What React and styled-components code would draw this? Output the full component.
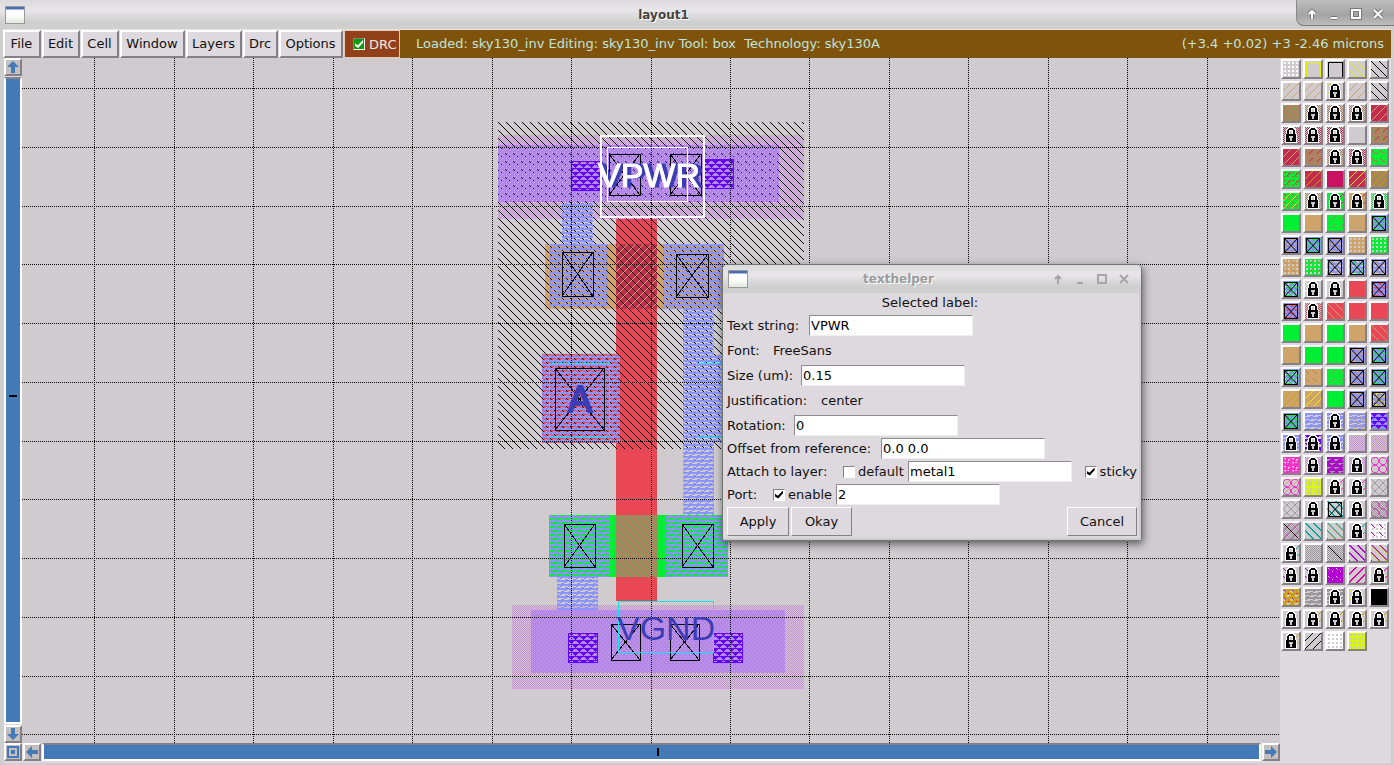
import React from "react";
import styled, { createGlobalStyle, css } from "styled-components";

const C = {
  panel: "#ded9de", canvas: "#cfcbcf", green: "#00ee33", tan: "#cea46b", brown: "#ac8260",
  crimson: "#c32c4e", red: "#ea4756", blue: "#8b93ff", violet: "#c98ae0", purple: "#6600ff",
  pink: "#ff33cc", plum: "#b400d2", teal: "#00aaa0", gold: "#c8a000", yellow: "#e6f000",
  lemon: "#d8f800", grey: "#a09ca0", slate: "#9a969a", ink: "#3c3cb4", cyan: "#14e6f0", rose: "#e6009a",
};

const Global = createGlobalStyle`
  *, *::before, *::after { box-sizing: border-box; }
  html, body, #root { height: 100%; }
  body { margin: 0; background: ${C.panel}; overflow: hidden; }
  body, button, input { font-family: "DejaVu Sans", sans-serif; font-size: 13px; color: #111; }
`;

const raised = css`
  border: 2px solid;
  border-color: #fff #858085 #858085 #fff;
`;

const Frame = styled.main`
  height: 100vh;
  display: flex;
  flex-direction: column;
  border: solid #cfcfcf;
  border-width: 0 3px 2px 4px;
  background: ${C.panel};
`;
const TitleBar = styled.header`
  height: ${(p) => (p.$small ? 28 : 29)}px;
  flex: none;
  display: flex;
  align-items: center;
  margin: ${(p) => (p.$small ? "0" : "0 -3px 0 -4px")};
  padding-left: 5px;
  background: linear-gradient(#dddadd, #e9e6e9 35%, #cfcfcf 75%);
`;
const WindowIcon = styled.span`
  width: 20px;
  height: 18px;
  border: 1px solid #999;
  background: linear-gradient(#4a6fb4 0 2px, #fff 3px, #fff 8px, #e2e8dc);
`;
const Title = styled.h1`
  flex: 1;
  margin: 0;
  padding-left: 6px;
  text-align: center;
  font: bold 12px "DejaVu Sans", sans-serif;
  color: ${(p) => (p.$dim ? "#9c9c9c" : "#444")};
  text-shadow: 1px 1px #fff;
`;
const Controls = styled.div`
  display: flex;
  align-self: stretch;
  align-items: center;
  padding: 0 6px 0 4px;
  ${(p) => !p.$dim && css`
    padding: 3px 5px 0 4px;
    margin-bottom: 3px;
    border-left: 1px solid #888;
    border-bottom: 1px solid #777;
    border-bottom-left-radius: 8px;
    background: linear-gradient(#bcbcbc, #a4a4a4 60%, #bdbdbd);
  `}
`;
const ControlButton = styled.button`
  width: 22px;
  height: 22px;
  padding: 0;
  border: 0;
  background: none;
  svg { display: block; margin: 0 auto; }
`;

const MenuBar = styled.nav`
  height: 29px;
  flex: none;
  display: flex;
  border-top: 1px solid #e8e2e0;
  margin-left: -1px;
`;
const MenuButton = styled.button`
  ${raised}
  padding: 0 1px 1px 0;
  margin-right: 1px;
  width: ${(p) => p.$w}px;
  background: ${C.panel};
`;
const DrcToggle = styled.label`
  display: flex;
  align-items: center;
  gap: 4px;
  width: 56px;
  padding-left: 8px;
  background: #92401a;
  border: 1px solid #e0c8b8;
  color: #f4e8e0;
`;
const Status = styled.p`
  flex: 1;
  margin: 0;
  padding: 0 7px 1px 16px;
  display: flex;
  align-items: center;
  justify-content: space-between;
  white-space: pre;
  background: #7f530b;
  color: #bfe4dc;
`;
const Check = styled.input`
  appearance: none;
  flex: none;
  position: relative;
  width: 12px;
  height: 12px;
  margin: 0;
  border: 1px solid;
  border-color: #858085 #fff #fff #858085;
  background: ${(p) => (p.$green ? "#0a9a0a" : "#fff")};
  &:checked::after {
    content: "";
    position: absolute;
    inset: 1px;
    background: ${(p) => (p.$green ? "#fff" : "#000")};
    clip-path: polygon(0 40%, 35% 65%, 100% 0, 100% 35%, 40% 100%, 0 75%);
  }
`;

const Body = styled.div`
  flex: 1;
  min-height: 0;
  display: flex;
`;
const Workspace = styled.section`
  flex: 1;
  min-width: 0;
  display: grid;
  grid-template: 1fr 20px / 18px 1fr;
`;
const VScroll = styled.div`
  display: flex;
  flex-direction: column;
  gap: 1px;
`;
const HScroll = styled.div`
  grid-column: 1 / 3;
  display: flex;
  gap: 1px;
  padding-bottom: 2px;
`;
const ScrollButton = styled.button`
  ${raised}
  flex: none;
  width: 18px;
  height: 18px;
  padding: 0;
  background: #c4c0c0;
  svg { display: block; }
`;
const Track = styled.div`
  flex: 1;
  border: 2px solid #fff;
  border-top-color: #858085;
  background: #447ab8;
  display: flex;
  align-items: center;
  justify-content: center;
  padding: ${(p) => (p.$vertical ? "0 0 10px" : "0 0 0 12px")};
  &::after {
    content: "";
    background: #000;
    width: ${(p) => (p.$vertical ? "8px" : "2px")};
    height: ${(p) => (p.$vertical ? "2px" : "8px")};
  }
`;
const Canvas = styled.div`
  position: relative;
  overflow: hidden;
  background: ${C.canvas};
  > svg { display: block; width: 100%; height: 100%; }
`;
const SelectedLabel = styled.text`
  fill: #fff;
  stroke: #fff;
  filter: drop-shadow(4px 0 0 ${C.ink});
`;

const Palette = styled.aside`
  width: 111px;
  flex: none;
  padding: 1px 0 0 1px;
`;
const Swatches = styled.div`
  display: grid;
  grid-template-columns: repeat(5, 20px);
  grid-auto-rows: 20px;
  gap: 2px;
`;
const Swatch = styled.button`
  ${raised}
  padding: 0;
  background: ${C.canvas};
  svg { display: block; }
`;

const Dialog = styled.form`
  position: absolute;
  left: 700px;
  top: 206px;
  width: 420px;
  border: 1px solid #6e746e;
  border-radius: 5px 5px 3px 3px;
  background: ${C.panel};
  box-shadow: 1px 3px 8px rgba(0, 0, 0, 0.55);
  overflow: hidden;
`;
const DialogBody = styled.div`
  padding: 0 2px 2px 4px;
  border: solid #cfcfcf;
  border-width: 0 2px 2px 0;
`;
const Heading = styled.h2`
  margin: 0;
  padding-right: 4px;
  height: 20px;
  font-size: inherit;
  font-weight: normal;
  line-height: 20px;
  text-align: center;
`;
const Row = styled.div`
  display: flex;
  align-items: center;
  height: ${(p) => (p.$tight ? 23 : 25)}px;
  padding-bottom: ${(p) => (p.$tight ? 2 : 0)}px;
  white-space: nowrap;
`;
const Name = styled.label`
  width: ${(p) => p.$w}px;
  padding-bottom: 1px;
`;
const Entry = styled.input`
  width: 164px;
  height: 21px;
  padding: 0 1px 1px;
  border: 1px solid;
  border-color: #8f8a8f #eee #eee #8f8a8f;
  border-radius: 0;
  background: #fff;
  color: #000;
`;
const Option = styled.label`
  display: flex;
  align-items: center;
  gap: 3px;
  width: ${(p) => (p.$w ? `${p.$w}px` : "auto")};
  margin-left: ${(p) => (p.$end ? "auto" : "0")};
`;
const Actions = styled.div`
  display: flex;
  gap: 2px;
`;
const ActionButton = styled.button`
  ${raised}
  border-width: 1px;
  width: ${(p) => p.$w}px;
  height: 29px;
  padding: 0 0 1px;
  background: ${C.panel};
  margin-left: ${(p) => (p.$last ? "auto" : "0")};
`;

/* One path of unit squares for every "1" in a bitmap. */
const bits = (rows) =>
  rows.flatMap((r, y) => [...r].map((b, x) => (b === "1" ? `M${x} ${y}h1v1h-1z` : ""))).join("");

const B = {
  diag: ["10000000", "01000000", "00100000", "00010000", "00001000", "00000100", "00000010", "00000001"],
  slash: ["00000001", "00000010", "00000100", "00001000", "00010000", "00100000", "01000000", "10000000"],
  diag2: ["11000000", "01100000", "00110000", "00011000", "00001100", "00000110", "00000011", "10000001"],
  slash2: ["00000011", "00000110", "00001100", "00011000", "00110000", "01100000", "11000000", "10000001"],
  sparseSlash: ["00000000", "00000001", "00000010", "00000100", "00001000", "00000000", "00000000", "00000000"],
  sparseDiag: ["00000000", "10000000", "01000000", "00100000", "00010000", "00000000", "00000000", "00000000"],
  dots: ["0000", "0110", "0110", "0000"],
  checker: ["10", "01"],
  dash: ["11111111", "11111111", "11000000", "00000111", "11111111", "11111111", "00001100", "01110000"],
  dash2: ["00000000", "00000000", "11110001", "11000000", "00000000", "00000000", "00011111", "00001100"],
  tri: ["11111111", "01111100", "00111000", "00010000", "11111111", "11000111", "10000011", "00000001"],
  lattice: ["10000001", "01000010", "00100100", "00011000", "00011000", "00100100", "01000010", "10000001"],
  circle: ["00111100", "01000010", "10000001", "10000001", "10000001", "10000001", "01000010", "00111100"],
  speck: ["00000000", "01100000", "00100110", "00000100", "00000000", "01101100", "00100000", "00000000"],
  pins: ["10001000", "00000000", "00100010", "00000000"],
  flecks: ["00000000", "01000000", "00100000", "00000000", "00000100", "00000000", "00000000", "00000000"],
  leds: ["00000000", "00000000", "00000000", "00010000", "00000000", "00000000", "00000000", "00000000"],
};

const Stipple = ({ id, color, rows }) => (
  <pattern id={id} width={rows[0].length} height={rows.length} patternUnits="userSpaceOnUse">
    <path d={bits(rows)} fill={color} shapeRendering="crispEdges" />
  </pattern>
);

const STIPPLES = [
  ["metal", "dash", C.blue], ["well", "diag", "#000"], ["rail", "checker", C.violet],
  ["gate", "slash", C.tan], ["channel", "diag", C.green], ["tap", "tri", C.purple],
  ["rose-pins", "pins", "#d8a4d8"], ["dark-flecks", "flecks", "#201850"], ["green-leds", "leds", "#00c840"],
];

const Lock = ({ hole }) => (
  <g shapeRendering="crispEdges">
    <path d="M5 0h6v1h1v1h1v5h1v9H2V7h1V2h1V1h1z" fill="#fff" />
    <path d="M6 1h4v1h1v1h1v4h1v8H3V7h1V3h1V2h1z" fill="#000" />
    <path d="M6 3h4v4H6z" fill="#fff" />
    <path d="M7 4h2v3H7z" fill={hole} />
    <path d="M6 9h4v2H9v3H7v-3H6z" fill={hole} />
  </g>
);

const Via = () => (
  <g stroke="#000" fill="none">
    <path d="M1.5 1.5h13v14h-13z" shapeRendering="crispEdges" />
    <path d="M2 2l12 13M14 2L2 15" />
  </g>
);

/* Each swatch: base colour, stipple layers [kind, colour], and an overlay mark. */
const s = (bg, ...layers) => ({ bg: C[bg] || bg, layers });
const lock = (kind, color, bg = "canvas") => ({ ...s(bg, ...(kind ? [[kind, color]] : [])), mark: "lock" });
const via = (color, extra) => ({ ...s("blue", ["dash2", color], ...(extra ? [["speck", extra]] : [])), mark: "via" });
const box = (color) => ({ ...s("canvas"), mark: "box", color });

const SWATCHES = [
  s("canvas", ["dots", "#fff"]), box(C.yellow), box("#000"), s("canvas", ["diag", C.yellow]), s("canvas", ["diag", "#000"]),
  s("canvas", ["slash", C.tan]), s("canvas", ["slash", C.tan]), lock("sparseDiag", C.yellow), s("canvas", ["slash", C.tan]), s("canvas", ["diag", "#000"]),
  s("brown", ["diag", "#5cb04c"]), lock("checker", C.brown), lock("checker", C.brown), lock("checker", C.brown), s("crimson", ["slash", C.tan]),
  lock("checker", C.crimson), lock("checker", C.crimson), lock("checker", C.crimson), s("canvas"), s("brown", ["sparseSlash", C.crimson], ["sparseDiag", "#5cb04c"]),
  s("crimson", ["slash", C.tan]), s("brown", ["sparseSlash", C.crimson]), lock("checker", C.brown), lock("checker", C.crimson), s("green", ["flecks", C.red], ["leds", C.red]),
  s("green", ["speck", C.red], ["sparseSlash", C.crimson]), s("crimson", ["slash", C.gold]), s("#c4145a", ["slash", C.rose]), s("crimson", ["slash", C.yellow]), s("brown", ["slash", C.gold], ["diag", "#7c9a28"]),
  s("green", ["speck", C.red], ["slash", C.yellow]), lock("checker", C.brown), lock("sparseSlash", C.rose, "green"), lock("sparseSlash", C.crimson, "tan"), lock("checker", C.green),
  s("green"), s("tan"), s("green", ["sparseSlash", C.brown]), s("tan", ["sparseDiag", C.grey]), via(C.green),
  via(C.tan), via(C.green), via(C.tan), s("tan", ["dots", C.canvas]), s("green", ["dots", C.canvas]),
  s("tan", ["dots", C.canvas], ["sparseDiag", C.brown]), s("green", ["dots", C.canvas], ["sparseSlash", C.brown]), via(C.canvas, C.tan), via(C.canvas, C.green), via(C.canvas, C.tan),
  via(C.green, C.canvas), lock("sparseDiag", "#fff"), lock(), s("red"), via(C.red),
  via(C.red), lock("checker", C.red), s("red", ["diag", C.tan]), s("red"), s("red"),
  s("green"), s("tan"), s("green"), s("tan"), s("red", ["diag", C.tan]),
  s("tan"), s("green"), s("green"), via(C.tan), via(C.green),
  via(C.green, C.canvas), s("tan", ["sparseDiag", C.brown]), s("green", ["sparseSlash", C.brown]), via(C.tan), via(C.green),
  s("tan", ["slash", C.gold]), s("tan", ["slash", C.yellow]), s("green"), via(C.tan), via(C.tan, C.yellow),
  via(C.green, C.green), s("canvas", ["dash", C.blue]), lock("dash", C.blue), s("canvas", ["dash", C.blue], ["diag", C.tan]), s("blue", ["tri", C.purple]),
  lock("dash", C.blue), lock("tri", C.purple), lock("dash", C.blue), s("canvas", ["checker", C.violet]), s("canvas", ["checker", C.violet], ["diag", C.tan]),
  s(C.pink, ["speck", C.canvas]), lock("checker", C.violet), s(C.plum, ["dash2", C.grey]), lock("checker", C.violet), s("canvas", ["circle", C.pink]),
  s("canvas", ["slash", C.tan], ["circle", C.pink]), s("lemon", ["speck", C.violet], ["dots", C.canvas]), lock("sparseSlash", C.pink), lock("sparseSlash", C.pink), s("canvas", ["lattice", C.grey]),
  s("canvas", ["diag", C.tan], ["lattice", C.grey]), lock(), { ...s("canvas", ["diag2", C.teal]), mark: "via" }, lock(), s("canvas", ["checker", C.slate], ["circle", "#c060b0"]),
  { ...s("canvas", ["checker", C.slate], ["lattice", "#c060b0"]), mark: "line" }, s("canvas", ["diag2", C.teal]), s("canvas", ["diag2", C.teal], ["diag", C.tan]), lock("sparseSlash", C.teal), s("#fff", ["dots", C.canvas], ["sparseDiag", C.plum]),
  lock("sparseSlash", C.teal), s("canvas", ["checker", C.slate]), { ...s("canvas", ["checker", C.slate]), mark: "line" }, s("canvas", ["diag2", C.plum]), s("canvas", ["diag2", C.plum], ["diag", C.gold]),
  lock("sparseDiag", C.plum), lock("sparseDiag", C.plum), s("plum", ["flecks", C.canvas]), s("canvas", ["slash2", C.rose]), lock("sparseSlash", C.rose),
  s("gold", ["dash2", C.canvas], ["flecks", C.rose]), s("canvas", ["dash", C.slate]), lock("dash", C.slate), lock("sparseDiag", C.yellow), s("#000"),
  lock(), lock("sparseSlash", C.gold), lock("sparseSlash", C.gold), lock("sparseSlash", C.gold), lock("sparseSlash", C.gold),
  lock("sparseSlash", C.gold), s("canvas", ["slash", "#000"]), s("#fff", ["dots", C.canvas]), s("lemon", ["dots", C.canvas]),
];

/* Repeats a bitmap until it covers a 16-pixel square. */
const tile = (rows) => {
  const wide = rows.map((r) => r.repeat(16 / r.length));
  return Array.from({ length: 16 / rows.length }, () => wide).flat();
};

const SwatchArt = ({ bg, layers, mark, color }) => (
  <svg width="16" height="16" aria-hidden="true">
    <rect width="16" height="16" fill={bg} />
    {layers.map(([kind, c]) => (
      <path key={kind} d={bits(tile(B[kind]))} fill={c} shapeRendering="crispEdges" />
    ))}
    {mark === "lock" && <Lock hole={C.canvas} />}
    {mark === "via" && <Via />}
    {mark === "line" && <path d="M1 1l14 14" stroke="#000" />}
    {mark === "box" && <path d="M1 16V1h14v15" fill="none" stroke={color} shapeRendering="crispEdges" />}
  </svg>
);

const Contact = ({ x, y, w, h }) => (
  <g fill="none" stroke="#000" shapeRendering="crispEdges">
    <rect x={x + 0.5} y={y + 0.5} width={w} height={h} />
    <path d={`M${x} ${y}l${w} ${h}M${x + w} ${y}l${-w} ${h}`} />
  </g>
);
const Area = ({ x1, y1, x2, y2, fill }) => <rect x={x1} y={y1} width={x2 - x1} height={y2 - y1} fill={fill} />;
const Tap = ({ x, y }) => (
  <rect x={x + 0.5} y={y + 0.5} width="29" height="29" fill="url(#tap)" stroke={C.purple} shapeRendering="crispEdges" />
);

const Drawing = () => {
  const m1 = "url(#metal)";
  const xs = Array.from({ length: 40 }, (_, i) => Math.round(94.3 + i * 79.46));
  const ys = Array.from({ length: 30 }, (_, i) => Math.round(88 + i * 58.75));
  return (
    <svg role="img" aria-label="Inverter layout">
      <defs>
        {STIPPLES.map(([id, kind, color]) => <Stipple key={id} id={id} color={color} rows={B[kind]} />)}
      </defs>
      <g transform="translate(-22 -58)">
        <Area x1={498} y1={135} x2={804} y2={219} fill="url(#rail)" />
        <Area x1={512} y1={605} x2={804} y2={689} fill="url(#rail)" />
        <Area x1={616} y1={219} x2={657} y2={601} fill={C.red} />
        <Area x1={545} y1={244} x2={724} y2={309} fill={C.tan} />
        <Area x1={616} y1={244} x2={657} y2={309} fill={C.crimson} />
        <Area x1={616} y1={244} x2={657} y2={309} fill="url(#gate)" />
        <Area x1={542} y1={354} x2={620} y2={443} fill={C.red} />
        <Area x1={498} y1={122} x2={804} y2={449} fill="url(#well)" />
        <Area x1={549} y1={515} x2={728} y2={577} fill={C.green} />
        <Area x1={616} y1={515} x2={657} y2={577} fill={C.brown} />
        <g opacity="0.6"><Area x1={616} y1={515} x2={657} y2={577} fill="url(#channel)" /></g>
        <Area x1={498} y1={145} x2={779} y2={202} fill="#ad86f0" />
        <Area x1={498} y1={145} x2={779} y2={202} fill="url(#rose-pins)" />
        <Area x1={498} y1={145} x2={779} y2={202} fill="url(#dark-flecks)" />
        <Area x1={553} y1={152} x2={758} y2={196} fill="url(#green-leds)" />
        <Area x1={531} y1={610} x2={785} y2={673} fill="#b086f0" />
        <Area x1={531} y1={610} x2={785} y2={673} fill="url(#rose-pins)" />
        <Area x1={562} y1={202} x2={593} y2={244} fill={m1} />
        <Area x1={549} y1={244} x2={608} y2={307} fill={m1} />
        <Area x1={663} y1={244} x2={723} y2={309} fill={m1} />
        <Area x1={683} y1={309} x2={714} y2={515} fill={m1} />
        <Area x1={714} y1={354} x2={724} y2={443} fill={m1} />
        <Area x1={542} y1={354} x2={620} y2={443} fill={m1} />
        <Area x1={549} y1={515} x2={610} y2={577} fill={m1} />
        <Area x1={666} y1={515} x2={728} y2={577} fill={m1} />
        <Area x1={557} y1={577} x2={598} y2={610} fill={m1} />
        <Tap x={571} y={161} /><Tap x={704} y={159} /><Tap x={568} y={633} /><Tap x={713} y={633} />
        <Contact x={609} y={154} w={31} h={41} />
        <Contact x={670} y={154} w={31} h={41} />
        <Contact x={562} y={252} w={31} h={44} />
        <Contact x={676} y={254} w={32} h={43} />
        <Contact x={555} y={368} w={49} h={62} />
        <Contact x={564} y={524} w={31} h={43} />
        <Contact x={682} y={524} w={31} h={43} />
        <Contact x={611} y={624} w={29} h={36} />
        <Contact x={670} y={624} w={29} h={36} />
        <g stroke="#000" strokeDasharray="1 1" shapeRendering="crispEdges">
          {xs.map((x) => <path key={x} d={`M${x + 0.5} 58V3000`} />)}
          {ys.map((y) => <path key={y} d={`M22 ${y + 0.5}H4000`} />)}
        </g>
        <path
          d="M549.5 363.5h60v74h-60z M697.5 363.5h60v74h-60z M618.5 601.5h95v51h-95z"
          fill="none" stroke={C.cyan} shapeRendering="crispEdges"
        />
        <g fontFamily="Liberation Sans, Arial, sans-serif" fontSize="34" fill={C.ink}>
          <text x="568" y="412" fontSize="36" stroke={C.ink} strokeWidth="2">A</text>
          <text x="617" y="640">VGND</text>
          <SelectedLabel x="598" y="187">VPWR</SelectedLabel>
        </g>
        <g fill="none" stroke="#fff" shapeRendering="crispEdges">
          <path d="M601 136h103v81h-103z" strokeWidth="2" />
          <path d="M607.5 147.5h80v54h-80z" />
        </g>
      </g>
    </svg>
  );
};

const ARROWS = {
  up: "M7 1l6 6H9v6H5V7H1z", down: "M7 13l6-6H9V1H5v6H1z",
  left: "M1 7l6-6v4h6v4H7v4z", right: "M13 7L7 1v4H1v4h6v4z",
};
const Arrow = ({ dir }) => (
  <ScrollButton type="button" aria-label={`Scroll ${dir}`}>
    <svg width="14" height="14"><path d={ARROWS[dir]} fill="#447ab8" /></svg>
  </ScrollButton>
);

const CONTROL_PATHS = {
  Shade: "M6 11V3M3 6l3-3 3 3", Minimize: "M3 10h6", Maximize: "M2 2h8v8H2z", Close: "M2 2l8 8M10 2l-8 8",
};
const WindowControls = ({ dim }) => (
  <Controls $dim={dim}>
    {Object.entries(CONTROL_PATHS).map(([name, d]) => (
      <ControlButton key={name} type="button" aria-label={name}>
        <svg width="12" height="12" fill="none">
          {!dim && <path d={d} stroke="#777" strokeWidth="4" />}
          <path d={d} stroke={dim ? "#a8a4a8" : "#fff"} strokeWidth="2" />
        </svg>
      </ControlButton>
    ))}
  </Controls>
);

const MENUS = [["File", 38], ["Edit", 38], ["Cell", 38], ["Window", 65], ["Layers", 56], ["Drc", 35], ["Options", 64]];

const Field = ({ id, label, w, value, tight }) => (
  <Row $tight={tight}>
    <Name htmlFor={id} $w={w}>{label}</Name>
    <Entry id={id} defaultValue={value} />
  </Row>
);

const TextHelper = () => (
  <Dialog aria-label="texthelper">
    <TitleBar $small>
      <WindowIcon />
      <Title as="h2" $dim>texthelper</Title>
      <WindowControls dim />
    </TitleBar>
    <DialogBody>
      <Heading>Selected label:</Heading>
      <Field id="string" label="Text string:" w={82} value="VPWR" />
      <Row><Name as="span" $w={46}>Font:</Name><Name as="span">FreeSans</Name></Row>
      <Field id="size" label="Size (um):" w={74} value="0.15" />
      <Row><Name as="span" $w={94}>Justification:</Name><Name as="span">center</Name></Row>
      <Field id="rotation" label="Rotation:" w={67} value="0" />
      <Field tight id="offset" label="Offset from reference:" w={154} value="0.0 0.0" />
      <Row $tight>
        <Name htmlFor="layer" $w={116}>Attach to layer:</Name>
        <Option $w={65}><Check type="checkbox" />default</Option>
        <Entry id="layer" defaultValue="metal1" />
        <Option $end><Check type="checkbox" defaultChecked />sticky</Option>
      </Row>
      <Row $tight>
        <Name htmlFor="port" $w={46}>Port:</Name>
        <Option $w={63}><Check type="checkbox" defaultChecked />enable</Option>
        <Entry id="port" defaultValue="2" />
      </Row>
      <Actions>
        <ActionButton type="button" $w={62}>Apply</ActionButton>
        <ActionButton type="button" $w={61}>Okay</ActionButton>
        <ActionButton type="button" $w={70} $last>Cancel</ActionButton>
      </Actions>
    </DialogBody>
  </Dialog>
);

export default function App() {
  return (
    <Frame>
      <Global />
      <TitleBar>
        <WindowIcon />
        <Title>layout1</Title>
        <WindowControls />
      </TitleBar>
      <MenuBar>
        {MENUS.map(([name, w]) => <MenuButton key={name} type="button" $w={w}>{name}</MenuButton>)}
        <DrcToggle><Check type="checkbox" defaultChecked $green />DRC</DrcToggle>
        <Status>
          <span>{"Loaded: sky130_inv Editing: sky130_inv Tool: box  Technology: sky130A"}</span>
          <span>(+3.4 +0.02) +3 -2.46 microns</span>
        </Status>
      </MenuBar>
      <Body>
        <Workspace>
          <VScroll>
            <Arrow dir="up" />
            <Track $vertical />
            <Arrow dir="down" />
          </VScroll>
          <Canvas>
            <Drawing />
            <TextHelper />
          </Canvas>
          <HScroll>
            <ScrollButton type="button" aria-label="Zoom to fit">
              <svg width="14" height="14" fill="none" stroke="#447ab8" strokeWidth="2"><path d="M2 2h10v10H2zM6 6h2v2H6z" /></svg>
            </ScrollButton>
            <Arrow dir="left" />
            <Track />
            <Arrow dir="right" />
          </HScroll>
        </Workspace>
        <Palette aria-label="Layers">
          <Swatches>
            {SWATCHES.map((art, i) => (
              <Swatch key={i} type="button" aria-label={`Layer ${i + 1}`}><SwatchArt {...art} /></Swatch>
            ))}
          </Swatches>
        </Palette>
      </Body>
    </Frame>
  );
}
